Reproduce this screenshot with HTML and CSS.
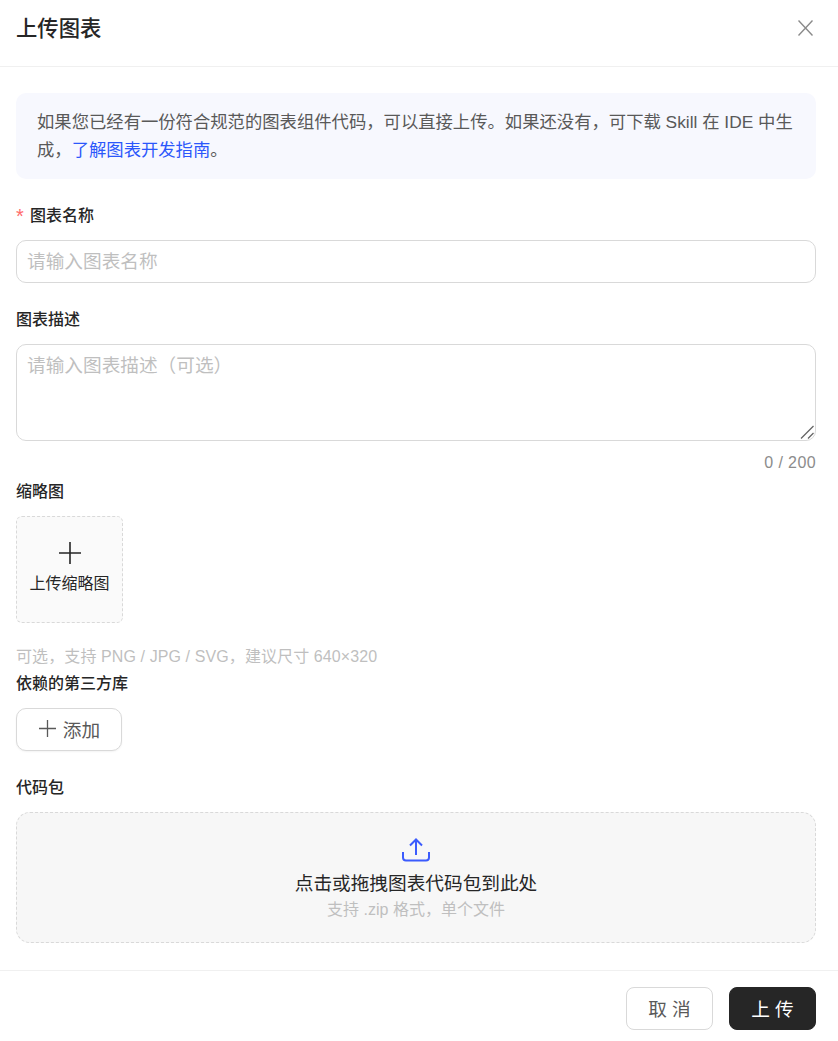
FILE: index.html
```html
<!DOCTYPE html>
<html lang="zh-CN">
<head>
  <meta charset="UTF-8">
  <meta name="viewport" content="width=device-width, initial-scale=1.0">
  <title>上传图表</title>
  <link rel="stylesheet" href="styles.css">
</head>
<body>

<div class="modal">
  <div class="modal-header">
    <h1 class="modal-title">上传图表</h1>
    <button class="close-btn" type="button" aria-label="关闭">
      <svg width="15" height="16" viewBox="0 0 15 16" fill="none" stroke="currentColor" stroke-width="1.4"><path d="M.5.5l14 15M14.500.5l-14 15"/></svg>
    </button>
  </div>

  <div class="modal-body">
    <div class="notice">如果您已经有一份符合规范的图表组件代码，可以直接上传。如果还没有，可下载 Skill 在 IDE 中生成，<a href="#">了解图表开发指南</a>。</div>

    <div class="field">
      <label class="field-label"><span class="required">*</span>图表名称</label>
      <input class="text-input" type="text" placeholder="请输入图表名称">
    </div>

    <div class="field field-count">
      <label class="field-label">图表描述</label>
      <div class="area-wrap">
        <textarea class="text-area" placeholder="请输入图表描述（可选）"></textarea>
        <svg class="resize-handle" width="14" height="14" viewBox="0 0 14 14" fill="none" stroke="#666" stroke-width="1.3"><path d="M1 13.500L13.500 1M8 13.500l5.500-5.500"/></svg>
      </div>
      <div class="count">0 / 200</div>
    </div>

    <div class="field field-hint">
      <label class="field-label">缩略图</label>
      <div class="thumb-upload">
        <svg width="22" height="22" viewBox="0 0 22 22" fill="none" stroke="currentColor" stroke-width="1.6"><path d="M11 0v22M0 11h22"/></svg>
        <span>上传缩略图</span>
      </div>
      <div class="hint">可选，支持 PNG / JPG / SVG，建议尺寸 640×320</div>
    </div>

    <div class="field">
      <label class="field-label">依赖的第三方库</label>
      <button class="add-btn" type="button">
        <svg width="17" height="17" viewBox="0 0 17 17" fill="none" stroke="currentColor" stroke-width="1.3"><path d="M8.5 0v17M0 8.5h17"/></svg>
        添加
      </button>
    </div>

    <div class="field">
      <label class="field-label">代码包</label>
      <div class="dropzone">
        <svg width="28" height="24" viewBox="0 0 28 24" fill="none" stroke="#3b5bfd" stroke-width="2"><path d="M14 17V2M8 7.500l6-6 6 6"/><path d="M1 14v5.500a3 3 0 0 0 3 3h20a3 3 0 0 0 3-3V14"/></svg>
        <div class="drop-title">点击或拖拽图表代码包到此处</div>
        <div class="drop-sub">支持 .zip 格式，单个文件</div>
      </div>
    </div>
  </div>

  <div class="modal-footer">
    <button class="btn" type="button">取 消</button>
    <button class="btn btn-dark" type="button">上 传</button>
  </div>
</div>

</body>
</html>
```

FILE: styles.css
```css
* {
  margin: 0;
  padding: 0;
  box-sizing: border-box;
  font-family: "Liberation Sans", "Noto Sans CJK SC", sans-serif;
}

body {
  background: #fff;
  color: #262626;
}

.modal {
  width: 838px;
  height: 1041px;
  display: flex;
  flex-direction: column;
}

.modal-header {
  height: 67px;
  padding: 0 25px 0 16px;
  display: flex;
  align-items: flex-start;
  justify-content: space-between;
  border-bottom: 1px solid #f0f0f0;
}

.modal-title {
  font-size: 21.33px;
  font-weight: 500;
  line-height: 58px;
  height: 58px;
}

.close-btn {
  background: none;
  border: none;
  color: #8a8a8a;
  display: flex;
  margin-top: 20px;
}

.modal-body {
  flex: 1;
  padding: 26px 22px 0 16px;
}

.notice {
  background: #f7f8fe;
  border-radius: 10px;
  padding: 15px 22px 15px 21px;
  font-size: 17.33px;
  line-height: 28px;
  color: #595959;
  margin-bottom: 24px;
}

.notice a {
  color: #2b57fb;
  text-decoration: none;
}

.field {
  margin-bottom: 24px;
}

.field-count {
  margin-bottom: 7px;
}

.field-hint {
  margin-bottom: 5px;
}

.field-label {
  display: flex;
  align-items: center;
  height: 24px;
  padding-top: 2px;
  line-height: 26px;
  margin-bottom: 13px;
  font-size: 16px;
  font-weight: 500;
  color: #262626;
}

.required {
  width: 14px;
  line-height: 24px;
  color: #ff6b6b;
  font-size: 20px;
}

.text-input,
.text-area {
  display: block;
  width: 100%;
  border: 1px solid #d9d9d9;
  border-radius: 10px;
  padding: 0 10px;
  font-size: 18.67px;
  color: #262626;
  outline: none;
  background: #fff;
}

.text-input {
  height: 43px;
}

.area-wrap {
  position: relative;
}

.text-area {
  height: 97px;
  padding-top: 7px;
  line-height: 28px;
  resize: none;
}

.resize-handle {
  position: absolute;
  right: 2px;
  bottom: 2px;
}

.text-input::placeholder,
.text-area::placeholder {
  color: #bfbfbf;
}

.count {
  margin-top: 11px;
  height: 20px;
  line-height: 22px;
  text-align: right;
  font-size: 16px;
  letter-spacing: 0.4px;
  color: #8c8c8c;
}

.thumb-upload {
  width: 107px;
  height: 107px;
  background: #fafafa;
  border: 1px dashed #d9d9d9;
  border-radius: 6px;
  display: flex;
  flex-direction: column;
  align-items: center;
  justify-content: center;
  gap: 6px;
  padding-bottom: 4px;
  font-size: 16px;
}

.hint {
  margin-top: 23px;
  height: 20px;
  line-height: 22px;
  font-size: 16px;
  letter-spacing: 0.1px;
  color: #bfbfbf;
}

.add-btn {
  width: 106px;
  height: 43px;
  display: flex;
  align-items: center;
  justify-content: center;
  gap: 7px;
  padding: 0 0 2px 1px;
  background: #fff;
  border: 1px solid #d9d9d9;
  border-radius: 10px;
  box-shadow: 0 1px 2px rgba(0, 0, 0, 0.05);
  font-size: 18.67px;
  color: #595959;
}

.dropzone {
  height: 131px;
  background: #f7f7f7;
  border: 1px dashed #d9d9d9;
  border-radius: 14px;
  display: flex;
  flex-direction: column;
  align-items: center;
  padding-top: 25px;
}

.drop-title {
  margin-top: 9px;
  font-size: 18.67px;
  line-height: 26px;
  color: #262626;
}

.drop-sub {
  margin-top: 1px;
  font-size: 16px;
  line-height: 24px;
  color: #bfbfbf;
}

.modal-footer {
  height: 71px;
  border-top: 1px solid #f0f0f0;
  padding: 16px 22px 0 0;
  display: flex;
  justify-content: flex-end;
  gap: 16px;
}

.btn {
  width: 87px;
  height: 43px;
  padding-bottom: 3px;
  background: #fff;
  border: 1px solid #d9d9d9;
  border-radius: 8px;
  font-size: 18.67px;
  color: #595959;
}

.btn-dark {
  background: #262626;
  border-color: #262626;
  color: #fff;
}
```
